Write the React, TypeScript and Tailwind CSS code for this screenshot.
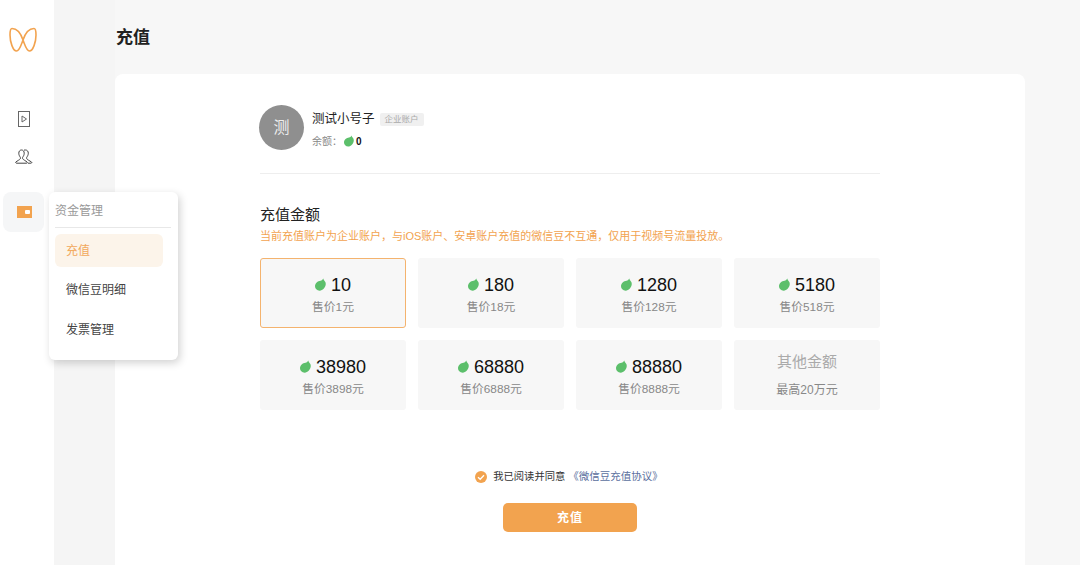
const font = { fontFamily: '"Liberation Sans", "Noto Sans CJK SC", sans-serif' };

const options = [
  { amount: "10", price: "售价1元", active: true },
  { amount: "180", price: "售价18元" },
  { amount: "1280", price: "售价128元" },
  { amount: "5180", price: "售价518元" },
  { amount: "38980", price: "售价3898元" },
  { amount: "68880", price: "售价6888元" },
  { amount: "88880", price: "售价8888元" },
];

const Bean = ({ size = 11 }: { size?: number }) => (
  <svg width={size} height={size * 1.2} viewBox="0 0 20 24">
    <path
      d="M15 1c.3 1.500.8 2.500 1.800 3.500C18.800 6.500 20 9 19.500 12c-.8 5.500-5.500 11-11 11C3.500 23 0 19.500 0 15 0 9.500 5 5.500 10 5c2.200-.2 4-1.700 5-4z"
      fill="#5cbf6b"
    />
  </svg>
);

const Logo = () => (
  <svg width="28" height="26" viewBox="0 0 28 26" fill="none" stroke="#f2a34f" strokeWidth="1.6">
    <path d="M3 1.500C1.200 1.500 1 5 1 8c0 7 3 16 6.500 16 3 0 4.500-6 6.500-11 2-6 6-11.500 11-11.500 1.800 0 2 3.500 2 6.500 0 7-3 16-6.500 16-3 0-4.500-6-6.500-11-2-6-6-11.500-11-11.500z" />
  </svg>
);

const Sidebar = () => (
  <aside className="w-[54px] shrink-0 bg-white flex flex-col items-center pr-[7px]">
    <div className="mt-[27px] -ml-[1px]">
      <Logo />
    </div>
    <div className="mt-[58px] ml-[1px]">
      <svg width="12" height="16" viewBox="0 0 12 16" fill="none" stroke="#666" strokeWidth="1">
        <rect x="0.500" y="0.500" width="11" height="15" />
        <path d="M4 5v6l4.500-3z" />
      </svg>
    </div>
    <div className="mt-[22px]">
      <svg width="18" height="16" viewBox="0 0 18 16" fill="none" stroke="#444" strokeWidth="1">
        <path d="M6.500 1C4.800 1 3.800 2.400 3.800 4.200c0 2 1 3.200 1.600 4.300.4 1-.4 2-2 2.800L.8 13c-.4.500 0 1.200.7 1.200h10c.9 0 1.100-.8.600-1.200l-2.700-1.800c-1.500-.8-2.200-1.800-1.800-2.800.6-1 1.600-2.200 1.600-4.200C9.200 2.400 8.200 1 6.500 1z" />
        <path d="M9 1.100c.5-.1 1-.1 1.500-.1 1.800 0 2.800 1.400 2.800 3.200 0 2-1 3.200-1.600 4.200-.4 1 .3 2 1.800 2.800l3 1.800c.5.400.3 1.200-.6 1.200h-3" />
      </svg>
    </div>
    <div className="mt-[27px] w-[41px] h-[40px] rounded-lg bg-[#f5f6f7] flex items-center justify-center pl-[2px]">
      <div className="w-[15px] h-[12px] bg-[#f2a34f] flex items-center justify-end pr-[2px]">
        <div className="w-[5px] h-[4px] rounded-[1px] bg-white" />
      </div>
    </div>
  </aside>
);

const Popover = () => (
  <div className="absolute left-[49px] top-[192px] w-[129px] h-[168px] bg-white rounded-md shadow-[2px_3px_8px_rgba(0,0,0,0.18)] pl-[6px] pr-[7px]">
    <div className="h-[36px] pt-[2px] border-b border-[#e8e8e8] flex items-center text-[12px] text-[#999999]">资金管理</div>
    <div className="mt-[6px] w-[108px] h-[33px] rounded-md bg-[#fcf4ea] flex items-center pl-[11px] text-[12px] text-[#f2a85c]">充值</div>
    <div className="mt-[6px] h-[33px] flex items-center pl-[11px] text-[12px] text-[#444444]">微信豆明细</div>
    <div className="mt-[7px] h-[33px] flex items-center pl-[11px] text-[12px] text-[#444444]">发票管理</div>
  </div>
);

const App = () => {
  return (
    <div className="relative w-[1080px] h-[565px] overflow-hidden flex bg-[#f5f5f5]" style={font}>
      <Sidebar />
      <main className="flex-1 ml-[61px] pr-[55px] min-w-0 bg-[#f7f7f7]">
        <h1 className="h-[74px] pt-[2px] pl-[1px] flex items-center text-[17px] font-bold text-[#222222]">充值</h1>
        <div className="bg-white rounded-t-lg h-[491px] px-[145px] pt-[31px]">
          <div className="flex items-center h-[45px] -ml-[1px]">
            <div className="w-[45px] h-[45px] rounded-full bg-[#8f8f8f] flex items-center justify-center text-[16px] text-[#eeeeee]">测</div>
            <div className="ml-[8px] pt-[4px]">
              <div className="flex items-center h-[16px]">
                <span className="text-[12.500px] text-[#222222]">测试小号子</span>
                <span className="ml-[5px] h-[13px] px-[5px] bg-[#f0f0f0] rounded-[2px] text-[8.500px] leading-[13px] text-[#aaaaaa]">企业账户</span>
              </div>
              <div className="flex items-center mt-[7px] h-[14px] text-[10px] text-[#888888]">
                <span>余额：</span>
                <span className="flex ml-[2px]"><Bean size={10} /></span>
                <span className="ml-[2px] text-[#111111] font-bold">0</span>
              </div>
            </div>
          </div>
          <div className="mt-[23px] border-t border-[#eeeeee]" />
          <h2 className="mt-[31px] text-[15px] leading-[20px] text-[#222222]">充值金额</h2>
          <p className="mt-[2px] text-[11px] leading-[18px] text-[#f2a34f]">当前充值账户为企业账户，与iOS账户、安卓账户充值的微信豆不互通，仅用于视频号流量投放。</p>
          <div className="mt-[13px] grid grid-cols-4 gap-x-[12px] gap-y-[12px]">
            {options.map((o) => (
              <div
                key={o.amount}
                className={`h-[70px] rounded-[3px] bg-[#f7f7f7] flex flex-col items-center ${o.active ? "border border-[#f4b36e] pt-[15px]" : "pt-[16px]"}`}
              >
                <div className="flex items-center h-[22px] gap-[5px]">
                  <Bean size={11} />
                  <span className="text-[18px] text-[#111111]">{o.amount}</span>
                </div>
                <div className="mt-[2px] text-[11.800px] leading-[18px] text-[#888888]">{o.price}</div>
              </div>
            ))}
            <div className="h-[70px] rounded-[3px] bg-[#f7f7f7] flex flex-col items-center pt-[11px]">
              <div className="h-[22px] text-[15px] leading-[22px] text-[#aaaaaa]">其他金额</div>
              <div className="mt-[8px] text-[12px] leading-[18px] text-[#888888]">最高20万元</div>
            </div>
          </div>
          <div className="mt-[59px] flex items-center justify-center h-[16px] pr-[2px]">
            <svg width="12" height="12" viewBox="0 0 12 12">
              <circle cx="6" cy="6" r="6" fill="#f2a34f" />
              <path d="M3 6.200l2.200 2.100L9 4.200" fill="none" stroke="#fff" strokeWidth="1.300" />
            </svg>
            <span className="ml-[6px] text-[10.300px] text-[#333333]">我已阅读并同意</span>
            <span className="ml-[3px] text-[10.500px] text-[#5b6f9e]">《微信豆充值协议》</span>
          </div>
          <div className="mt-[18px] flex justify-center">
            <button className="w-[134px] h-[29px] rounded-[5px] bg-[#f2a34f] text-white text-[12px] font-bold tracking-[1px]">充值</button>
          </div>
        </div>
      </main>
      <Popover />
    </div>
  );
};

export default App;
